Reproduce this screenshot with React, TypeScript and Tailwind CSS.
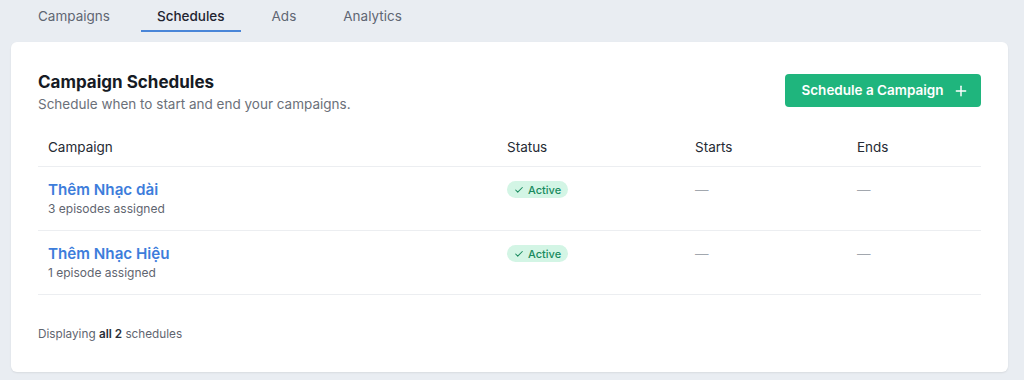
import { Check, Plus } from "lucide-react";

const rows = [
  { name: "Thêm Nhạc dài", episodes: "3 episodes assigned" },
  { name: "Thêm Nhạc Hiệu", episodes: "1 episode assigned" },
];

export default function App() {
  return (
    <div className="h-[380px] w-[1024px] overflow-hidden bg-[#e9edf2] font-['Inter',sans-serif] text-[#1f2430]">
      <nav className="flex h-[32px] gap-[15px] pl-[22px]">
        {["Campaigns", "Schedules", "Ads", "Analytics"].map((t) => (
          <div
            key={t}
            className={
              t === "Schedules"
                ? "border-b-2 border-[#4a86d8] px-4 pt-[6px] text-[13.5px] font-medium text-[#1f2430]"
                : "border-b-2 border-transparent px-4 pt-[6px] text-[13.5px] text-[#5f6672]"
            }
          >
            {t}
          </div>
        ))}
      </nav>
      <div className="ml-[11px] mt-[10px] h-[330px] w-[997px] rounded-md bg-white px-[27px] pt-[29px] shadow-[0_1px_2px_rgba(0,0,0,0.08)]">
        <div className="flex items-start justify-between">
          <div>
            <h1 className="text-[17px] font-bold leading-[22px] text-[#161b24]">Campaign Schedules</h1>
            <p className="mt-[1px] text-[13.5px] text-[#6b7079]">Schedule when to start and end your campaigns.</p>
          </div>
          <button className="mt-[3px] flex h-[33px] w-[196px] items-center justify-center gap-[9px] rounded-[4px] bg-[#1fb57d] pl-[4px] text-[13.5px] font-semibold text-white">
            Schedule a Campaign
            <Plus size={16} strokeWidth={2.2} />
          </button>
        </div>
        <div className="mt-[13px]">
          <div className="flex h-[40px] items-center border-b border-[#eceef1] text-[13.5px] text-[#252a33]">
            <div className="w-[469px] pl-[10px]">Campaign</div>
            <div className="w-[188px]">Status</div>
            <div className="w-[162px]">Starts</div>
            <div>Ends</div>
          </div>
          {rows.map((r) => (
            <div key={r.name} className="flex h-[64px] items-start border-b border-[#eceef1] pt-[13px]">
              <div className="w-[469px] pl-[10px]">
                <div className="text-[15.2px] font-semibold leading-[20px] text-[#3d7ddb]">{r.name}</div>
                <div className="text-[12px] leading-[18px] text-[#5f6570]">{r.episodes}</div>
              </div>
              <div className="flex w-[188px] pt-[1px]">
                <span className="inline-flex h-[17px] items-center gap-[4px] rounded-full bg-[#d3f5e5] px-[7px] text-[11px] font-medium text-[#198a5e]">
                  <Check size={10} strokeWidth={2.5} />
                  Active
                </span>
              </div>
              <div className="w-[162px] text-[13.5px] leading-[20px] text-[#a2a7ae]">—</div>
              <div className="text-[13.5px] leading-[20px] text-[#a2a7ae]">—</div>
            </div>
          ))}
        </div>
        <p className="mt-[31px] text-[11.75px] text-[#5f6570]">
          Displaying <span className="font-semibold text-[#2a2f38]">all 2</span> schedules
        </p>
      </div>
    </div>
  );
}
